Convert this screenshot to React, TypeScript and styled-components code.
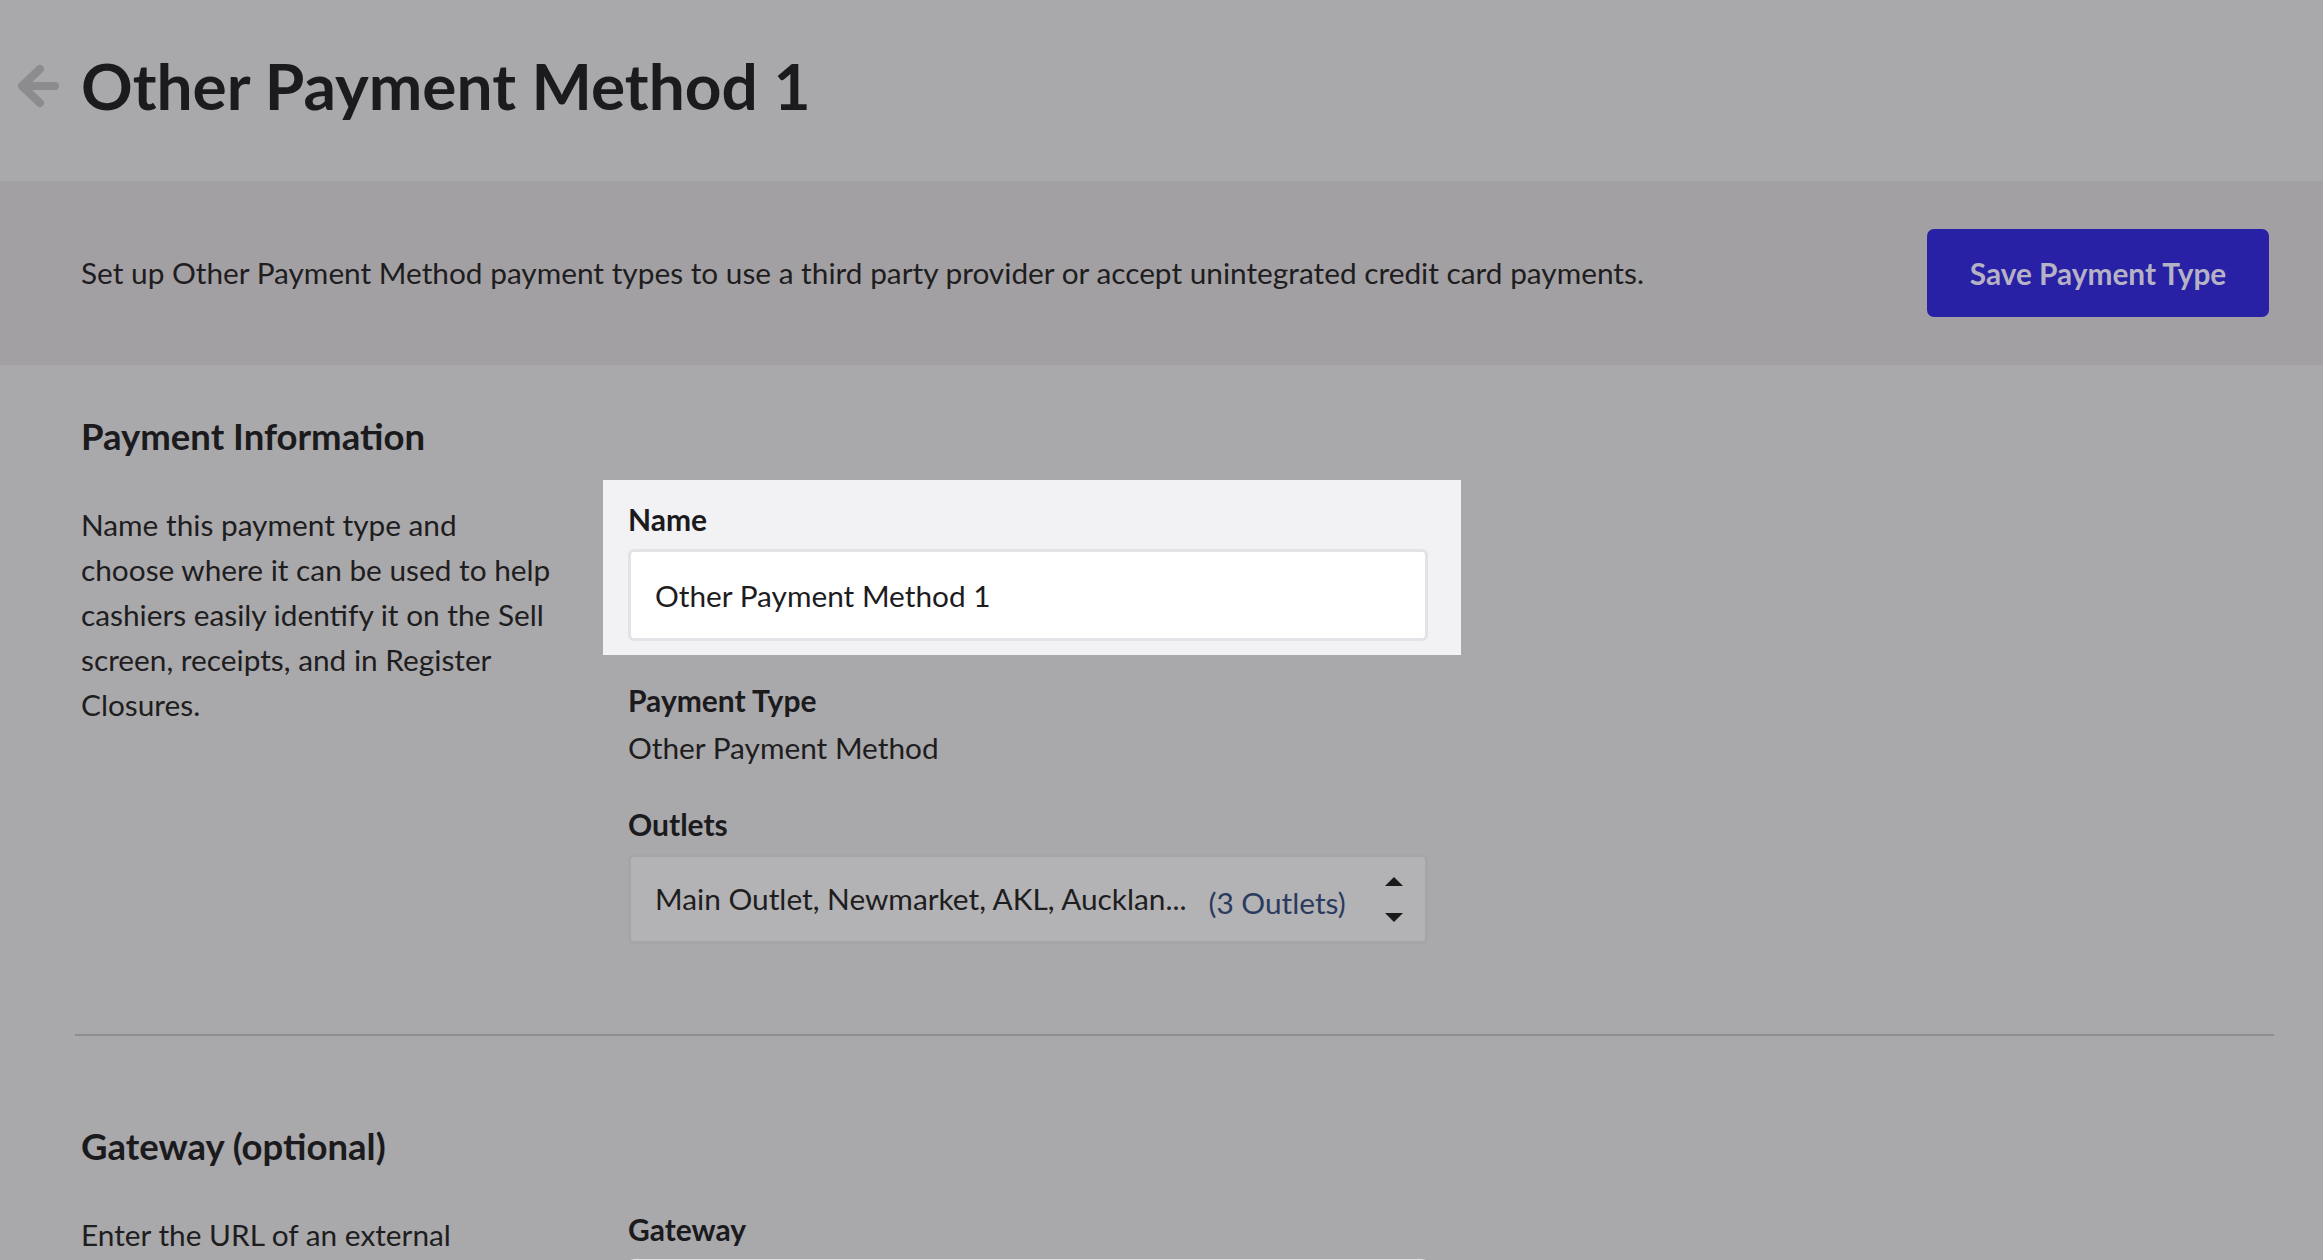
import React from "react";
import styled, { createGlobalStyle } from "styled-components";

const Global = createGlobalStyle`
  html, body {
    margin: 0;
    padding: 0;
    background: #a9a8ab;
    font-family: Lato, "Open Sans", "Liberation Sans", sans-serif;
    color: #1d1c1f;
  }
  * { box-sizing: border-box; }
`;

const Page = styled.div`
  width: 100%;
  min-height: 1260px;
  background: #a9a8ab;
`;

const Header = styled.header`
  display: flex;
  align-items: center;
  gap: 17px;
  height: 181px;
  padding: 0 0 10px 14px;
`;

const BackIcon = styled.svg`
  width: 50px;
  height: 52px;
  flex: none;
  color: #8c8b8e;
`;

const Title = styled.h1`
  margin: 0;
  font-size: 64px;
  font-weight: 700;
  line-height: 78px;
  color: #1b1a1d;
`;

const Band = styled.div`
  display: flex;
  align-items: center;
  justify-content: space-between;
  height: 184px;
  padding: 0 54px 0 81px;
  background: #a2a0a3;
`;

const BandText = styled.p`
  margin: 0;
  font-size: 29.8px;
  line-height: 36px;
  color: #1e1d20;
`;

const SaveButton = styled.button`
  width: 342px;
  height: 88px;
  border: none;
  border-radius: 7px;
  background: #2820a5;
  color: #b4b2c4;
  font-family: inherit;
  font-size: 29.8px;
  font-weight: 700;
  cursor: pointer;
`;

const Section = styled.section<{ $top: number; $bottom: number }>`
  padding: ${(p) => p.$top}px 0 ${(p) => p.$bottom}px 81px;
`;

const SectionTitle = styled.h2`
  margin: 0 0 44px;
  font-size: 36.5px;
  font-weight: 700;
  line-height: 43px;
  color: #1b1a1d;
`;

const Row = styled.div`
  display: grid;
  grid-template-columns: 547px 800px;
  align-items: start;
`;

const Description = styled.p`
  margin: 0;
  max-width: 470px;
  font-size: 29.8px;
  line-height: 45px;
  color: #1e1d20;
`;

const Fields = styled.div`
  display: flex;
  flex-direction: column;
`;

const Spotlight = styled.div`
  margin: -22px -33px 28px -25px;
  padding: 22px 33px 14px 25px;
  background: #f2f1f4;
`;

const FieldGroup = styled.div`
  display: flex;
  flex-direction: column;
  margin-bottom: 42px;
`;

const Label = styled.label`
  display: block;
  margin-bottom: 12px;
  font-size: 30px;
  font-weight: 700;
  line-height: 35px;
  color: #1b1a1d;
`;

const Value = styled.div`
  font-size: 29.8px;
  line-height: 35px;
  color: #1e1d20;
`;

const TextInput = styled.input`
  width: 800px;
  height: 92px;
  padding: 0 24px;
  border: 3px solid #e3e2e6;
  border-radius: 6px;
  background: #ffffff;
  font-family: inherit;
  font-size: 29.8px;
  color: #1d1c1f;
  outline: none;
`;

const Select = styled.div`
  display: flex;
  align-items: center;
  width: 800px;
  height: 90px;
  padding: 0 22px 0 24px;
  border: 3px solid #a5a4a7;
  border-radius: 6px;
  background: #b3b2b4;
  font-size: 29.8px;
  line-height: 36px;
`;

const SelectText = styled.span`
  color: #1e1d20;
  white-space: nowrap;
`;

const SelectCount = styled.span`
  margin-left: 22px;
  padding-top: 8px;
  color: #2b3b5e;
  white-space: nowrap;
`;

const Arrows = styled.svg`
  margin-left: auto;
  width: 18px;
  height: 45px;
  flex: none;
  color: #1a1a1a;
`;

const Divider = styled.hr`
  margin: 0 49px 0 75px;
  height: 2px;
  border: none;
  background: #8e8d90;
`;

export default function App() {
  return (
    <Page>
      <Global />
      <Header>
        <BackIcon viewBox="0 0 50 52" aria-hidden>
          <path
            d="M26 9 L8 26 L26 43 M8 26 L41 26"
            fill="none"
            stroke="currentColor"
            strokeWidth="8"
            strokeLinecap="round"
            strokeLinejoin="round"
          />
        </BackIcon>
        <Title>Other Payment Method 1</Title>
      </Header>

      <Band>
        <BandText>
          Set up Other Payment Method payment types to use a third party provider or accept unintegrated credit card payments.
        </BandText>
        <SaveButton>Save Payment Type</SaveButton>
      </Band>

      <Section $top={50} $bottom={90}>
        <SectionTitle>Payment Information</SectionTitle>
        <Row>
          <Description>
            Name this payment type and choose where it can be used to help cashiers easily identify it on the Sell screen, receipts, and in Register Closures.
          </Description>
          <Fields>
            <Spotlight>
              <Label>Name</Label>
              <TextInput defaultValue="Other Payment Method 1" />
            </Spotlight>
            <FieldGroup>
              <Label>Payment Type</Label>
              <Value>Other Payment Method</Value>
            </FieldGroup>
            <div>
              <Label>Outlets</Label>
              <Select>
                <SelectText>Main Outlet, Newmarket, AKL, Aucklan...</SelectText>
                <SelectCount>(3 Outlets)</SelectCount>
                <Arrows viewBox="0 0 18 45" aria-hidden>
                  <polygon points="9,0 18,9 0,9" fill="currentColor" />
                  <polygon points="0,36 18,36 9,45" fill="currentColor" />
                </Arrows>
              </Select>
            </div>
          </Fields>
        </Row>
      </Section>

      <Divider />

      <Section $top={89} $bottom={88}>
        <SectionTitle>Gateway (optional)</SectionTitle>
        <Row>
          <Description>
            Enter the URL of an external payment gateway to process payments of this type.
          </Description>
          <Fields>
            <FieldGroup>
              <Label>Gateway</Label>
              <TextInput defaultValue="" />
            </FieldGroup>
          </Fields>
        </Row>
      </Section>
    </Page>
  );
}
